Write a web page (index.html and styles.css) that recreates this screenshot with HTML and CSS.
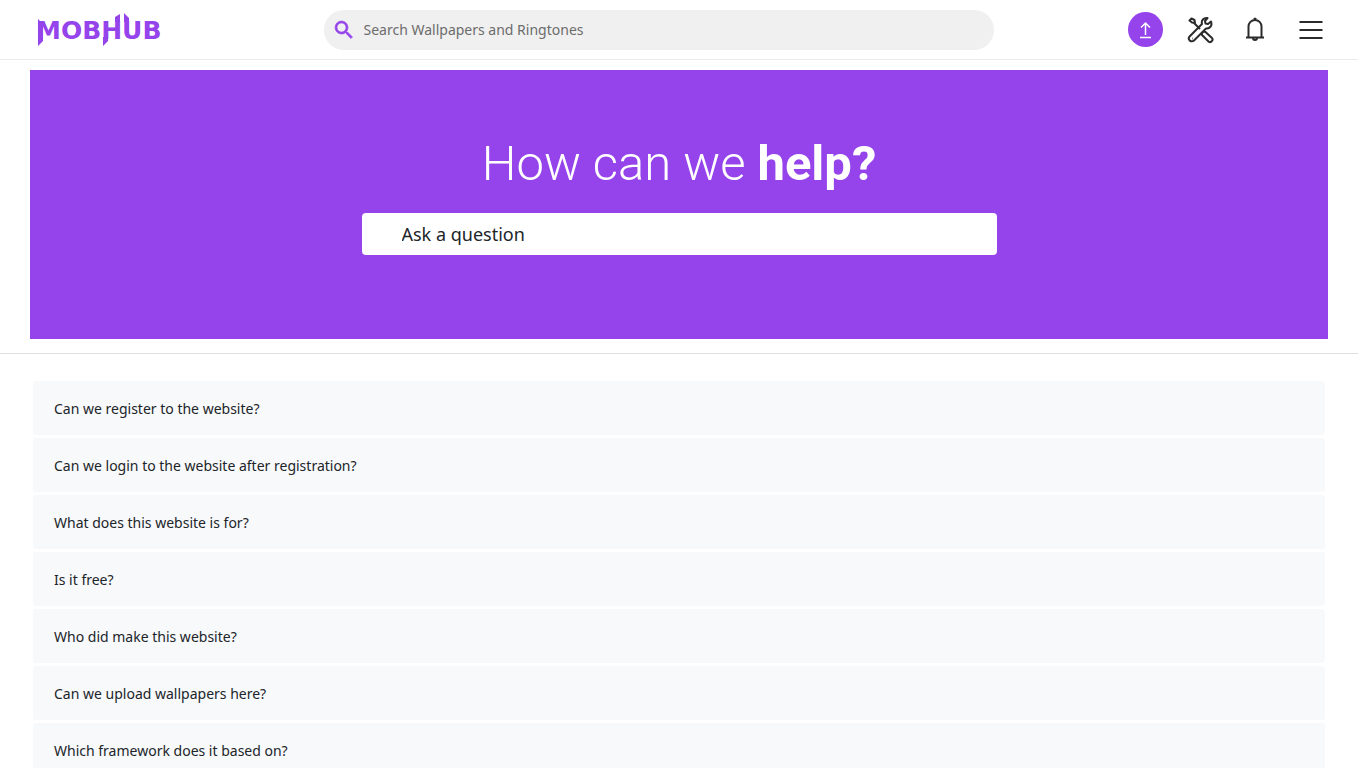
FILE: index.html
```html
<!DOCTYPE html>
<html lang="en">
<head>
    <meta charset="utf-8">
    <meta name="viewport" content="width=device-width, initial-scale=1">
    <title>MobHub - Help</title>
    <link rel="stylesheet" href="styles.css">
</head>
<body>
    <header class="navbar">
        <a class="logo" href="#" aria-label="MobHub">
            <svg width="126" height="34" viewBox="0 0 126 34">
                <text x="-1" y="26">MOBHUB</text>
                <path d="M1 6v27l5-5V11zM66 24v9l5-5v-4zM78 9V4l5-3v8zM87 9V0l5 5v4z"/>
            </svg>
        </a>
        <form class="search">
            <svg width="24" height="24" viewBox="0 0 24 24">
                <path d="M15.500 14h-.79l-.28-.27A6.470 6.470 0 0 0 16 9.500 6.500 6.500 0 1 0 9.500 16c1.610 0 3.090-.59 4.230-1.570l.27.28v.79l5 4.990L20.490 19l-4.990-5zm-6 0C7.010 14 5 11.990 5 9.500S7.010 5 9.500 5 14 7.010 14 9.500 11.990 14 9.500 14z"/>
            </svg>
            <input type="text" placeholder="Search Wallpapers and Ringtones" aria-label="Search Wallpapers and Ringtones">
        </form>
        <nav class="actions">
            <a class="upload" href="#" aria-label="Upload">
                <svg width="15" height="18" viewBox="0 0 15 18">
                    <path d="M7.500 14V2M3 6.500L7.500 2 12 6.500M2 16.500h11"/>
                </svg>
            </a>
            <a href="#" aria-label="Tools">
                <svg width="28" height="28" viewBox="0 0 28 28">
                    <path d="M2.500 4.500L4.500 2.500 7.500 4 8 7 5 6.500zM7 7l6 6M15 17l2-1.500 1.500.5 6.500 6a2.500 2.500 0 0 1-3.500 3.500L15 19zM24 5.500l-3 2.500-2.500-.5L18 5l2.500-3c-4-.5-6.500 2.500-5.500 6L2.800 20.200a3 3 0 0 0 4.200 4.300L19 12.500c4 .5 6.500-3 5-7zM5 22.500h.5"/>
                </svg>
            </a>
            <a href="#" aria-label="Notifications">
                <svg width="24" height="28" viewBox="0 0 24 28">
                    <path d="M3 21.500h18M5.500 21V10.500a6.500 6.500 0 0 1 13 0V21M12 4V1.800M10.500 3h3M10 22a2 2 0 1 0 4 0"/>
                </svg>
            </a>
            <button class="menu" type="button" aria-label="Menu">
                <svg width="24" height="20" viewBox="0 0 24 20">
                    <path d="M0.500 2h23M0.500 10h23M0.500 18h23"/>
                </svg>
            </button>
        </nav>
    </header>

    <section class="hero">
        <h1>How can we <b>help?</b></h1>
        <input type="text" placeholder="Ask a question" aria-label="Ask a question">
    </section>
    <hr>

    <main class="faq">
        <button type="button">Can we register to the website?</button>
        <button type="button">Can we login to the website after registration?</button>
        <button type="button">What does this website is for?</button>
        <button type="button">Is it free?</button>
        <button type="button">Who did make this website?</button>
        <button type="button">Can we upload wallpapers here?</button>
        <button type="button">Which framework does it based on?</button>
    </main>
</body>
</html>
```

FILE: styles.css
```css
* {
    box-sizing: border-box;
}
body {
    margin: 0;
    background: #fff;
    color: #212529;
    font-family: "Noto Sans", sans-serif;
    font-size: 14px;
}
input, button {
    font-family: inherit;
    border: 0;
}

/* top bar */
.navbar {
    display: grid;
    grid-template-columns: 20fr minmax(0, 670px) 23fr;
    align-items: center;
    height: 60px;
    padding: 0 35px 0 37px;
    border-bottom: 1px solid #ebebeb;
}
.logo {
    display: flex;
}
.logo svg {
    fill: #9543eb;
    font-family: "DejaVu Sans", sans-serif;
    font-size: 25px;
    font-weight: bold;
}
.search {
    display: flex;
    align-items: center;
    gap: 8px;
    height: 40px;
    padding: 0 20px 0 8px;
    border-radius: 20px;
    background: #f0f0f0;
}
.search svg {
    fill: #9543eb;
    stroke: #9543eb;
    stroke-width: 0.6;
}
.search input {
    flex: 1;
    padding: 0;
    background: none;
    font-size: 14px;
}
.search input::placeholder {
    color: #6c6c6c;
}
.actions {
    display: flex;
    justify-content: flex-end;
    align-items: center;
    gap: 28px;
}
.actions a, .menu {
    display: flex;
    align-items: center;
    justify-content: center;
}
.actions svg {
    fill: none;
    stroke: #2b2b2b;
    stroke-width: 2;
    stroke-linejoin: round;
}
.actions .upload {
    width: 35px;
    height: 35px;
    margin-right: -4px;
    border-radius: 50%;
    background: #9543eb;
}
.actions .upload svg {
    stroke: #fff;
    stroke-width: 1.5;
}
.menu {
    padding: 0;
    margin-left: 4px;
    background: none;
}

/* question banner */
.hero {
    display: flex;
    flex-direction: column;
    align-items: center;
    margin: 10px 30px 14px;
    padding: 64px 20px 84px;
    background: #9543eb;
}
.hero h1 {
    margin: 0 0 19px;
    color: #fff;
    font-family: Roboto, sans-serif;
    font-size: 49px;
    font-weight: 300;
    line-height: 60px;
}
.hero b {
    font-weight: 700;
}
.hero input {
    width: 100%;
    max-width: 635px;
    height: 42px;
    padding: 0 40px;
    border-radius: 4px;
    background: #fff;
    font-size: 18px;
}
.hero input::placeholder {
    color: #212529;
}
hr {
    margin: 0;
    border: 0;
    border-top: 1px solid #e0e0e0;
}

/* questions */
.faq {
    display: flex;
    flex-direction: column;
    gap: 3px;
    padding: 27px 33px;
}
.faq button {
    height: 54px;
    padding: 0 21px;
    border-radius: 3px;
    background: #f8f9fb;
    color: #212529;
    font-size: 14px;
    text-align: left;
}
```
